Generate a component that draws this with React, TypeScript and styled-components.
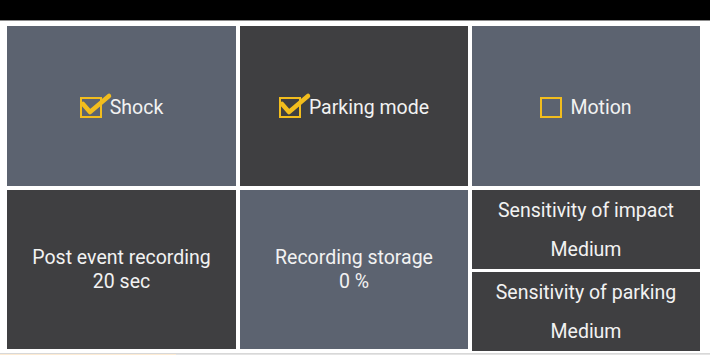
import styled, { createGlobalStyle } from 'styled-components'

const GlobalStyle = createGlobalStyle`
  html, body {
    margin: 0;
    padding: 0;
    background: #ffffff;
    font-family: Roboto, "Noto Sans", sans-serif;
    overflow: hidden;
  }
`

const colors = {
  slate: '#5c6370',
  dark: '#3f3f41',
  text: '#f2f2f2',
  yellow: '#f2bd1d',
}

const Page = styled.div`
  width: 710px;
  height: 355px;
  display: flex;
  flex-direction: column;
`

const StatusBar = styled.div`
  height: 20px;
  background: #000;
  border-bottom: 1px solid #8d8d8d;
`

const Grid = styled.div`
  display: grid;
  grid-template-columns: 229px 228px 228px;
  grid-template-rows: 160px 159px;
  gap: 4px;
  margin: 5px 0 0 7px;
`

const Tile = styled.div<{ $dark?: boolean }>`
  background: ${(p) => (p.$dark ? colors.dark : colors.slate)};
  color: ${colors.text};
  display: flex;
  flex-direction: column;
  align-items: center;
  justify-content: center;
  font-size: 19.5px;
  line-height: 24px;
  text-align: center;
`

const Stack = styled.div`
  display: flex;
  flex-direction: column;
  gap: 3px;
`

const SubTile = styled(Tile)`
  flex: 1;
  line-height: 39px;
  padding-top: 1px;
`

const CheckRow = styled.label`
  display: flex;
  align-items: center;
  gap: 8px;
  padding-top: 3px;
  cursor: pointer;
`

const Box = styled.span`
  position: relative;
  width: 18px;
  height: 17px;
  border: 2px solid ${colors.yellow};
  display: inline-block;

  svg {
    position: absolute;
    left: 0;
    top: -4px;
    overflow: visible;
  }
`

const BottomBar = styled.div`
  margin-top: 4px;
  flex: 1;
  display: flex;
  border-top: 1px solid #d8d8d8;

  span:first-child {
    width: 176px;
    background: #fdebd3;
  }
  span:last-child {
    flex: 1;
    background: #e4e4e4;
  }
`

const Check = ({ checked, label }: { checked: boolean; label: string }) => (
  <CheckRow>
    <Box>
      {checked && (
        <svg width="28" height="22" viewBox="0 0 28 22">
          <path
            d="M1 9 L8 17 L27 1"
            fill="none"
            stroke={colors.yellow}
            strokeWidth="4.5"
            strokeLinecap="round"
            strokeLinejoin="round"
          />
        </svg>
      )}
    </Box>
    {label}
  </CheckRow>
)

export default function App() {
  return (
    <Page>
      <GlobalStyle />
      <StatusBar />
      <Grid>
        <Tile>
          <Check checked label="Shock" />
        </Tile>
        <Tile $dark>
          <Check checked label="Parking mode" />
        </Tile>
        <Tile>
          <Check checked={false} label="Motion" />
        </Tile>
        <Tile $dark>
          <div>Post event recording</div>
          <div>20 sec</div>
        </Tile>
        <Tile>
          <div>Recording storage</div>
          <div>0 %</div>
        </Tile>
        <Stack>
          <SubTile $dark>
            <div>Sensitivity of impact</div>
            <div>Medium</div>
          </SubTile>
          <SubTile $dark>
            <div>Sensitivity of parking</div>
            <div>Medium</div>
          </SubTile>
        </Stack>
      </Grid>
      <BottomBar>
        <span />
        <span />
      </BottomBar>
    </Page>
  )
}
